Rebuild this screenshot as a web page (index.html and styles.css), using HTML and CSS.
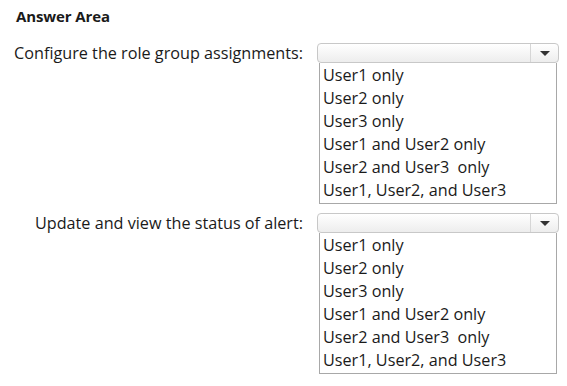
FILE: index.html
```html
<!DOCTYPE html>
<html lang="en">
<head>
    <meta charset="UTF-8">
    <meta name="viewport" content="width=device-width, initial-scale=1.0">
    <title>Answer Area</title>
    <link rel="stylesheet" href="styles.css">
</head>
<body>
    <div class="answer-area">
        <h2>Answer Area</h2>

        <div class="row">
            <label class="prompt">Configure the role group assignments:</label>
            <div class="dropdown">
                <div class="select"><span class="arrow"></span></div>
                <ul class="options">
                    <li>User1 only</li>
                    <li>User2 only</li>
                    <li>User3 only</li>
                    <li>User1 and User2 only</li>
                    <li>User2 and User3&nbsp; only</li>
                    <li>User1, User2, and User3</li>
                </ul>
            </div>
        </div>

        <div class="row">
            <label class="prompt">Update and view the status of alert:</label>
            <div class="dropdown">
                <div class="select"><span class="arrow"></span></div>
                <ul class="options">
                    <li>User1 only</li>
                    <li>User2 only</li>
                    <li>User3 only</li>
                    <li>User1 and User2 only</li>
                    <li>User2 and User3&nbsp; only</li>
                    <li>User1, User2, and User3</li>
                </ul>
            </div>
        </div>
    </div>
</body>
</html>
```

FILE: styles.css
```css
body {
    font-family: "Open Sans", "Liberation Sans", sans-serif;
    color: #1a1a1a;
    background: #fff;
    margin: 0;
    padding: 0;
}
.answer-area {
    padding: 8px 0 0 10px;
}
.answer-area h2 {
    font-size: 15px;
    font-weight: bold;
    margin: 0 0 19px 6px;
    line-height: 16px;
    letter-spacing: -0.1px;
}
.row {
    display: grid;
    grid-template-columns: 293px 242px;
    column-gap: 14px;
    margin-bottom: 9px;
}
.prompt {
    text-align: right;
    white-space: nowrap;
    font-size: 16.2px;
    line-height: 20px;
}
.select {
    height: 18px;
    border: 1px solid #c8c8c8;
    border-radius: 4px;
    background: linear-gradient(#ffffff, #ededed);
    display: flex;
    justify-content: flex-end;
}
.arrow {
    width: 27px;
    border-left: 1px solid #d6d6d6;
    display: flex;
    align-items: center;
    justify-content: center;
}
.arrow::after {
    content: "";
    border-left: 5px solid transparent;
    border-right: 5px solid transparent;
    border-top: 5px solid #333;
}
.options {
    list-style-type: none;
    margin: 0 2px 0 2px;
    padding: 1px 0 1px 3px;
    border: 1px solid #a8a8a8;
    border-top: none;
    font-size: 16.2px;
    line-height: 23px;
}
```
